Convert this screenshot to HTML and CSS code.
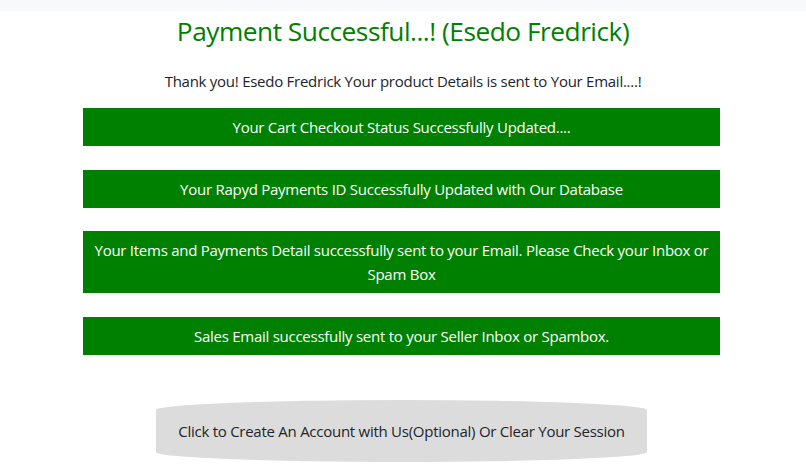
FILE: index.html
```html
<!DOCTYPE html>
<html lang="en">
<head>
<meta charset="utf-8">
<title>Payment Successful</title>
<link rel="stylesheet" href="styles.css">
</head>
<body>
<div class="topbar"></div>
<main class="page">
  <h2 class="title">Payment Successful...! (Esedo Fredrick)</h2>
  <p class="subtitle">Thank you! Esedo Fredrick Your product Details is sent to Your Email....!</p>
  <div class="list">
    <div class="status">Your Cart Checkout Status Successfully Updated....</div>
    <div class="status">Your Rapyd Payments ID Successfully Updated with Our Database</div>
    <div class="status">Your Items and Payments Detail successfully sent to your Email. Please Check your Inbox or Spam Box</div>
    <div class="status">Sales Email successfully sent to your Seller Inbox or Spambox.</div>
  </div>
  <div class="actions">
    <button class="session-btn" type="button">Click to Create An Account with Us(Optional) Or Clear Your Session</button>
  </div>
</main>
</body>
</html>
```
FILE: styles.css
```css
html, body {
  margin: 0;
  padding: 0;
  background: #ffffff;
}
body {
  font-family: "Open Sans", "Noto Sans", sans-serif;
  color: #212529;
}
.topbar {
  height: 11px;
  background: #f8f9fa;
}
.title {
  margin: 3px 0 0;
  font-size: 26.3px;
  line-height: 34px;
  letter-spacing: -0.5px;
  font-weight: 400;
  color: #008000;
  text-align: center;
}
.subtitle {
  margin: 21px 0 0;
  font-size: 15px;
  line-height: 24px;
  letter-spacing: -0.26px;
  text-align: center;
}
.list {
  display: flex;
  flex-direction: column;
  align-items: center;
  gap: 23.5px;
  margin-top: 15px;
  padding-right: 3px;
}
.status {
  box-sizing: border-box;
  width: 637px;
  padding: 7px 8px;
  background: #008000;
  color: #ffffff;
  font-size: 15px;
  line-height: 24px;
  letter-spacing: -0.26px;
  text-align: center;
}
.actions {
  display: flex;
  justify-content: center;
  padding-right: 3px;
  margin-top: 45.5px;
}
.session-btn {
  width: 491px;
  height: 62px;
  border: none;
  border-radius: 50% / 10px;
  background: #dcdcdc;
  color: #212529;
  font-family: inherit;
  font-size: 15px;
  line-height: 24px;
  letter-spacing: -0.26px;
  padding: 0;
}
```
